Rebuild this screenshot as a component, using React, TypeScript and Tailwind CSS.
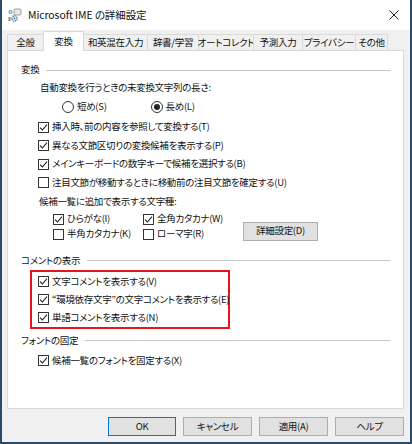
import React from "react"

const tabs = [
  { label: "全般", w: "w-[37px]" },
  { label: "変換", w: "w-[41px]", active: true },
  { label: "和英混在入力", w: "w-[65px]" },
  { label: "辞書/学習", w: "w-[52px]" },
  { label: "オートコレクト", w: "w-[56px]" },
  { label: "予測入力", w: "w-[50px]" },
  { label: "プライバシー", w: "w-[54px]" },
  { label: "その他", w: "w-[33px]" },
]

function Box({ on }: { on?: boolean }) {
  return (
    <span className="flex h-[11px] w-[11px] shrink-0 items-center justify-center border border-[#333] bg-white">
      {on && (
        <svg width="9" height="9" viewBox="0 0 9 9">
          <path d="M1 4.6 L3.4 7 L8 1.6" fill="none" stroke="#222" strokeWidth="1.1" />
        </svg>
      )}
    </span>
  )
}

function CheckRow({ on, label, h = "h-[18px]" }: { on?: boolean; label: string; h?: string }) {
  return (
    <div className={`flex items-center gap-[3px] ${h}`}>
      <Box on={on} />
      <span className="whitespace-nowrap">{label}</span>
    </div>
  )
}

function Radio({ on, label }: { on?: boolean; label: string }) {
  return (
    <div className="flex items-center gap-[3px]">
      <span className="flex h-[12px] w-[12px] items-center justify-center rounded-full border border-[#333] bg-white">
        {on && <span className="h-[6px] w-[6px] rounded-full bg-[#222]" />}
      </span>
      <span>{label}</span>
    </div>
  )
}

function GroupHead({ label }: { label: string }) {
  return (
    <div className="flex h-[16px] items-center">
      <span className="whitespace-nowrap">{label}</span>
      <span className="ml-[7px] h-px flex-1 bg-[#c4c4c4]" />
    </div>
  )
}

function Button({ label, def, w = "w-[69px]" }: { label: string; def?: boolean; w?: string }) {
  return (
    <div
      className={`flex h-[19px] items-center justify-center border bg-[#e1e1e1] ${w} ${
        def ? "border-[#0078d7]" : "border-[#adadad]"
      }`}
    >
      {label}
    </div>
  )
}

function ImeIcon() {
  return (
    <svg width="15" height="15" viewBox="0 0 15 15">
      <rect x="7" y="1" width="7" height="6" rx="1" fill="#e8e8e8" stroke="#8a8a8a" strokeWidth="0.8" />
      <circle cx="3.5" cy="4" r="2" fill="#6fa6d6" />
      <circle cx="3.5" cy="4" r="0.8" fill="#fff" />
      <circle cx="7.5" cy="10.5" r="2.6" fill="none" stroke="#3a6ea5" strokeWidth="1.4" strokeDasharray="1.2 0.8" />
      <circle cx="7.5" cy="10.5" r="1" fill="#3a6ea5" />
      <rect x="1.5" y="9" width="2" height="4" fill="#8a8a8a" />
    </svg>
  )
}

export default function App() {
  return (
    <div className="flex h-[444px] w-[412px] flex-col border-x-2 border-b-2 border-[#2b4b69] bg-[#f0f0f0] font-['Noto_Sans_CJK_JP','Noto_Sans',sans-serif] text-[9.5px] leading-none tracking-[-0.3px] text-[#111] [font-feature-settings:'palt']">
      {/* title bar */}
      <div className="flex h-[30px] shrink-0 items-center bg-white pl-[5px] pr-[11px]">
        <ImeIcon />
        <span className="ml-[6px] text-[10.5px] tracking-[-0.1px]">Microsoft IME の詳細設定</span>
        <span className="flex-1" />
        <svg width="10" height="10" viewBox="0 0 10 10">
          <path d="M0.5 0.5 L9.5 9.5 M9.5 0.5 L0.5 9.5" stroke="#222" strokeWidth="1" />
        </svg>
      </div>

      <div className="flex flex-1 flex-col pl-[5px] pr-[6px]">
        {/* tabs */}
        <div className="flex h-[20px] items-end pl-[1px]">
          {tabs.map((t) => (
            <div
              key={t.label}
              className={`-ml-px flex items-center justify-center border border-b-0 border-[#d9d9d9] whitespace-nowrap ${t.w} ${
                t.active ? "relative z-10 -mb-px h-[20px] bg-white" : "h-[16px] bg-[#f0f0f0]"
              }`}
            >
              {t.label}
            </div>
          ))}
        </div>

        {/* tab page */}
        <div className="flex h-[359px] flex-col border border-[#d9d9d9] bg-white pl-[13px] pr-[13px]">
          <div className="mt-[11px]">
            <GroupHead label="変換" />
          </div>
          <div className="ml-[19px] mt-[2px] flex h-[16px] items-center">自動変換を行うときの未変換文字列の長さ:</div>
          <div className="ml-[41px] mt-[3px] flex h-[16px] items-center gap-[44px]">
            <Radio label="短め(S)" />
            <Radio on label="長め(L)" />
          </div>
          <div className="ml-[17px] mt-[3px] flex flex-col gap-[0.5px]">
            <CheckRow on label="挿入時、前の内容を参照して変換する(T)" />
            <CheckRow on label="異なる文節区切りの変換候補を表示する(P)" />
            <CheckRow on label="メインキーボードの数字キーで候補を選択する(B)" />
            <CheckRow label="注目文節が移動するときに移動前の注目文節を確定する(U)" />
          </div>
          <div className="ml-[18px] mt-[2px] flex h-[16px] items-center">候補一覧に追加で表示する文字種:</div>
          <div className="ml-[32px] mt-[2px] flex items-end">
            <div className="grid grid-cols-[90px_90px]">
              <CheckRow on h="h-[15px]" label="ひらがな(I)" />
              <CheckRow on h="h-[15px]" label="全角カタカナ(W)" />
              <CheckRow h="h-[15px]" label="半角カタカナ(K)" />
              <CheckRow h="h-[15px]" label="ローマ字(R)" />
            </div>
            <div className="mb-[1px] ml-[10px]">
              <Button label="詳細設定(D)" w="w-[75px]" />
            </div>
          </div>

          <div className="mt-[11px]">
            <GroupHead label="コメントの表示" />
          </div>
          <div className="ml-[9px] mt-[1px] flex w-[200px] flex-col border-2 border-[#e8141c] pl-[6px] pt-[1px]">
            <CheckRow on label="文字コメントを表示する(V)" />
            <CheckRow on label="“環境依存文字”の文字コメントを表示する(E)" />
            <CheckRow on label="単語コメントを表示する(N)" />
          </div>

          <div className="mt-[4px]">
            <GroupHead label="フォントの固定" />
          </div>
          <div className="ml-[17px] mt-[3px]">
            <CheckRow on label="候補一覧のフォントを固定する(X)" />
          </div>
        </div>

        {/* dialog buttons */}
        <div className="mt-[8px] flex justify-end gap-[7px] pr-0">
          <Button def label="OK" w="w-[68px]" />
          <Button label="キャンセル" />
          <Button label="適用(A)" />
          <Button label="ヘルプ" />
        </div>
      </div>
    </div>
  )
}
